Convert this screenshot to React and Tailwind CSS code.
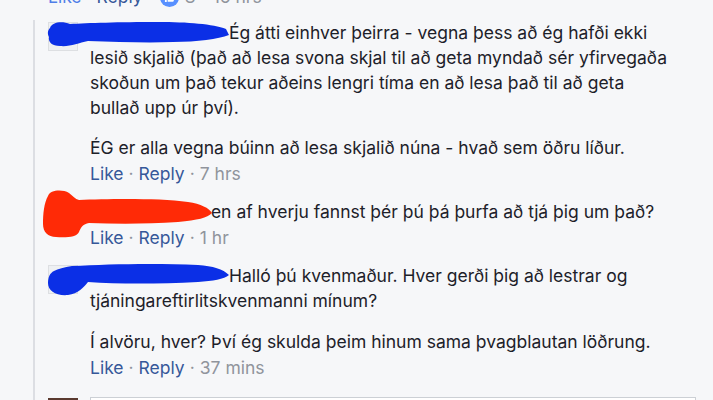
import React from "react";

const font = { fontFamily: "Inter, 'Noto Sans', sans-serif" };

function Scribble({ color, d, className }) {
  return (
    <svg
      className={"pointer-events-none absolute " + className}
      width="200"
      height="50"
      viewBox="-10 -10 200 50"
      fill={color}
    >
      <path d={d} />
    </svg>
  );
}

function Actions({ time, className = "" }) {
  return (
    <div className={"flex items-center text-[17.5px] leading-[20px] " + className}>
      <span className="text-[#365899]">Like</span>
      <span className="px-[5px] text-[#90949c]">·</span>
      <span className="text-[#365899]">Reply</span>
      <span className="px-[5px] text-[#90949c]">·</span>
      <span className="text-[#90949c]">{time}</span>
    </div>
  );
}

function Comment({ scribble, children, time, className = "" }) {
  return (
    <div className={"relative flex " + className}>
      <div className="mt-[2px] h-[29px] w-[30px] shrink-0 border border-[#dddfe2] bg-[#eef0f3]" />
      <div className="ml-[12px] w-[586px] text-[17.5px] leading-[25px] text-[#1d2129]">
        {children}
        <Actions time={time} className="mt-[4px]" />
      </div>
      {scribble}
    </div>
  );
}

export default function App() {
  return (
    <div className="h-[400px] w-[713px] overflow-hidden bg-[#f6f7f9]" style={font}>
      {/* parent comment's action row, cut off at the top */}
      <div className="-mt-[13px] flex h-[20px] items-center pl-[48px] text-[17.5px] leading-[20px]">
        <span className="text-[#4f7ee8]">Like</span>
        <span className="px-[5px] text-[#90949c]">·</span>
        <span className="text-[#365899]">Reply</span>
        <span className="px-[5px] text-[#90949c]">·</span>
        <span className="ml-[2px] flex h-[19px] w-[19px] items-center justify-center rounded-full bg-[#5890ff]">
          <svg width="11" height="11" viewBox="0 0 24 24" fill="white">
            <path d="M2 10h4v12H2zM8 21V10l5-8c1.5 0 2.5 1 2.2 2.6L14.5 9H21c1.2 0 2 1 1.8 2.2l-1.6 8.2c-.2 1-1 1.6-2 1.6z" />
          </svg>
        </span>
        <span className="ml-[6px] text-[#90949c]">8</span>
        <span className="px-[6px] text-[#90949c]">·</span>
        <span className="text-[#90949c]">16 hrs</span>
      </div>

      <div className="ml-[33px] mt-[13px] border-l-2 border-[#dcdee3] pl-[13px]">
        <Comment
          time="7 hrs"
          scribble={
            <Scribble
              color="#0b2fe6"
              className="left-[-10px] top-[-10px]"
              d="M2,8 C4,2 14,1 22,4 C40,3 70,2 110,2 C140,2 165,4 178,9 L181,15 C170,19 150,22 125,22 C100,23 70,22 40,21 C30,23 22,27 12,26 C4,26 0,22 1,17 C-1,13 0,10 2,8 Z"
            />
          }
        >
          <p>
            <span className="inline-block w-[134px]" /> Ég átti einhver þeirra - vegna þess að ég hafði ekki
            lesið skjalið (það að lesa svona skjal til að geta myndað sér yfirvegaða skoðun um það tekur
            aðeins lengri tíma en að lesa það til að geta bullað upp úr því).
          </p>
          <p className="mt-[15px]">ÉG er alla vegna búinn að lesa skjalið núna - hvað sem öðru líður.</p>
        </Comment>

        <Comment
          time="1 hr"
          className="mt-[15px]"
          scribble={
            <Scribble
              color="#ff2a06"
              className="left-[-10px] top-[-10px]"
              d="M0,-3 C2,-9 14,-10 21,-6 C25,-3 27,0 31,1 C60,0 110,-1 140,3 C153,5 161,9 164,14 C159,19 150,21 130,23 C100,25 70,25 41,24 C35,25 33,28 31,33 C29,38 18,39 8,38 C0,38 -5,33 -5,25 C-5,15 -4,4 0,-3 Z"
            />
          }
        >
          <p>
            <span className="inline-block w-[116px]" /> en af hverju fannst þér þú þá þurfa að tjá þig um það?
          </p>
        </Comment>

        <Comment
          time="37 mins"
          className="mt-[15px]"
          scribble={
            <Scribble
              color="#0b2fe6"
              className="left-[-10px] top-[-10px]"
              d="M6,8 C10,6 16,4 24,3 C60,1 110,0 150,2 C165,3 175,6 181,12 C176,16 165,18 150,19 C110,21 70,21 40,19 C36,24 30,31 20,32 C8,33 0,28 0,20 C0,14 2,10 6,8 Z"
            />
          }
        >
          <p>
            <span className="inline-block w-[134px]" /> Halló þú kvenmaður. Hver gerði þig að lestrar og
            tjáningareftirlitskvenmanni mínum?
          </p>
          <p className="mt-[16px]">Í alvöru, hver? Því ég skulda þeim hinum sama þvagblautan löðrung.</p>
        </Comment>

        {/* composer */}
        <div className="mt-[19px] flex">
          <div className="mt-[1px] h-[30px] w-[30px] shrink-0 bg-[#5a3a30]" />
          <div className="ml-[12px] h-[32px] w-[606px] border border-[#ccd0d5] bg-white" />
        </div>
      </div>
    </div>
  );
}
